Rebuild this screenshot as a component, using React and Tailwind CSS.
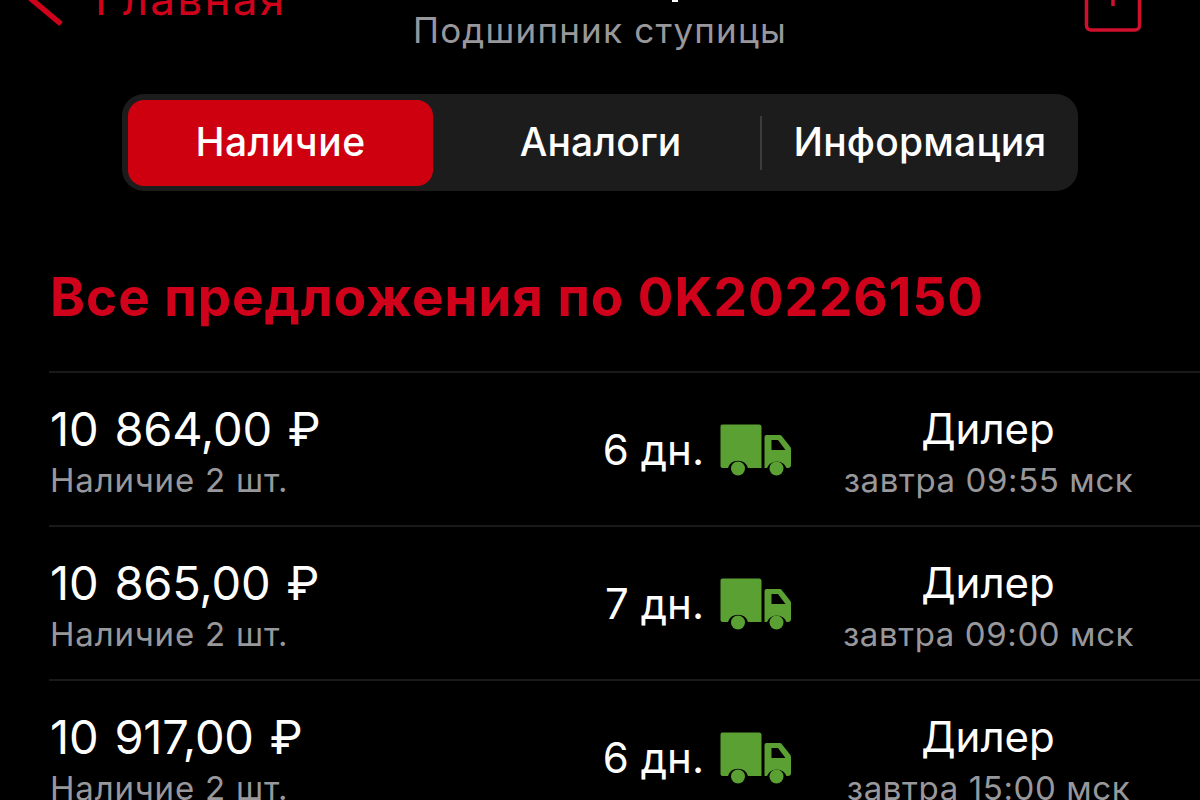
const offers = [
  { price: "10 864,00 ₽", stock: "Наличие 2 шт.", days: "6 дн.", seller: "Дилер", updated: "завтра 09:55 мск" },
  { price: "10 865,00 ₽", stock: "Наличие 2 шт.", days: "7 дн.", seller: "Дилер", updated: "завтра 09:00 мск" },
  { price: "10 917,00 ₽", stock: "Наличие 2 шт.", days: "6 дн.", seller: "Дилер", updated: "завтра 15:00 мск" },
];

function TruckIcon() {
  return (
    <svg viewBox="0 0 72 54" className="mt-[3px] h-[54px] w-[72px] shrink-0" fill="#5aa032">
      <path d="M2.500 0.500H39a2.500 2.500 0 0 1 2.500 2.500V44H28a10.500 10.500 0 0 0-20 0H2.500A2 2 0 0 1 .5 42V2.500a2 2 0 0 1 2-2Z" />
      <path
        fillRule="evenodd"
        d="M46.500 11H60a2 2 0 0 1 1.500.8L70 22.500a4 4 0 0 1 1 2.700V41a3 3 0 0 1-3 3H66.500a10.500 10.500 0 0 0-19.500 0H44.500V13a2 2 0 0 1 2-2ZM51.500 16V26H65.500L58 16Z"
      />
      <circle cx="18" cy="44.500" r="7" />
      <circle cx="56.500" cy="44.500" r="7" />
    </svg>
  );
}

function Header() {
  return (
    <header className="flex h-[94px] shrink-0 items-start justify-between overflow-hidden">
      <div className="flex w-[400px] items-start text-[#d0021b]">
        <svg viewBox="0 0 64 30" className="mr-[31px] h-[30px] w-[64px]" fill="none" stroke="currentColor" strokeWidth="5.500">
          <path d="M18 -12L61 24" />
        </svg>
        <span className="-mt-[26px] text-[44px] leading-[50px] tracking-[2.3px]">Главная</span>
      </div>
      <div className="relative w-[400px] text-center">
        {/* descender of the title scrolled off the top edge */}
        <span className="absolute top-0 left-[272px] h-[2px] w-[6px] bg-white" />
        <p className="mt-[9px] text-[35px] leading-[42px] tracking-[1.2px] whitespace-nowrap text-[#98989c]">Подшипник ступицы</p>
      </div>
      <div className="flex w-[400px] justify-end pr-[58px]">
        <svg viewBox="0 0 58 34" className="h-[34px] w-[58px]" fill="none" stroke="#d0102c" strokeWidth="3.500">
          <path d="M2.500 -2V25.500a4.500 4.500 0 0 0 4.500 4.500H51a4.500 4.500 0 0 0 4.500-4.500V-2" />
          <path d="M29 -2V6" />
        </svg>
      </div>
    </header>
  );
}

function Tabs() {
  return (
    <nav className="mx-auto flex h-[97px] w-[956px] shrink-0 items-center rounded-[22px] bg-[#1c1c1d] px-[6px] text-[39px] font-medium text-white">
      <button className="h-[86px] w-[305px] rounded-[16px] bg-[#ce0010] tracking-[0.5px]">Наличие</button>
      <button className="w-[327px] pl-[8px] tracking-[0.1px]">Аналоги</button>
      <span className="h-[54px] w-[2px] bg-[#3c3c3f]" />
      <button className="flex-1 pl-[6px] tracking-[0.2px]">Информация</button>
    </nav>
  );
}

function OfferRow({ offer }) {
  return (
    <li className="flex h-[154px] shrink-0 border-t-2 border-[#19191a] text-white">
      <div className="w-[500px] pt-[26px] pl-px">
        <p className="text-[47px] leading-[60px] tracking-[-0.2px] [word-spacing:3px]">{offer.price}</p>
        <p className="text-[33px] leading-[42px] tracking-[0.8px] text-[#98989c]">{offer.stock}</p>
      </div>
      <div className="flex w-[243px] items-center justify-end gap-[16px]">
        <span className="text-[42px]">{offer.days}</span>
        <TruckIcon />
      </div>
      <div className="ml-[46px] w-[300px] pt-[26px] text-center">
        <p className="text-[42px] leading-[60px]">{offer.seller}</p>
        <p className="pl-px text-[33px] leading-[42px] tracking-[0.6px] whitespace-nowrap text-[#98989c]">{offer.updated}</p>
      </div>
    </li>
  );
}

export default function App() {
  return (
    <div className="flex h-[800px] w-[1200px] flex-col overflow-hidden bg-black font-['Inter',sans-serif]">
      <Header />
      <Tabs />
      <h1 className="mt-[74px] mb-[42px] shrink-0 pl-[50px] text-[53px] leading-[64px] font-bold tracking-[0.95px] whitespace-nowrap text-[#d0021b]">
        Все предложения по 0K20226150
      </h1>
      <ul className="flex flex-col pl-[49px]">
        {offers.map((offer) => (
          <OfferRow key={offer.price} offer={offer} />
        ))}
      </ul>
    </div>
  );
}
